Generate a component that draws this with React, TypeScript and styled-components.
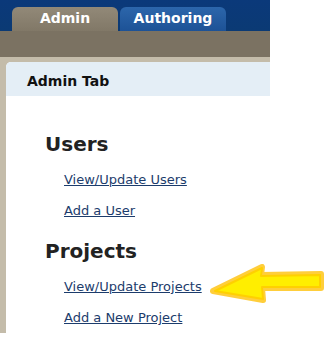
import styled, { createGlobalStyle } from "styled-components";

const GlobalStyle = createGlobalStyle`
  html, body {
    margin: 0;
    padding: 0;
    background: #ffffff;
  }
  body {
    font-family: "DejaVu Sans", Verdana, sans-serif;
  }
`;

export default function App() {
  return (
    <>
      <GlobalStyle />
      <Page>
        <TopBar>
          <Tab $active>Admin</Tab>
          <Tab>Authoring</Tab>
        </TopBar>
        <SubBar />
        <Divider />
        <Body>
          <Panel>
            <PanelHeader>Admin Tab</PanelHeader>
            <PanelContent>
              <Section>
                <Heading>Users</Heading>
                <LinkList>
                  <NavLink href="#">View/Update Users</NavLink>
                  <NavLink href="#">Add a User</NavLink>
                </LinkList>
              </Section>
              <Section>
                <Heading>Projects</Heading>
                <LinkList>
                  <NavLink href="#">View/Update Projects</NavLink>
                  <NavLink href="#">Add a New Project</NavLink>
                </LinkList>
              </Section>
            </PanelContent>
          </Panel>
        </Body>
        {/* annotation arrow pointing at the link */}
        <Arrow width="118" height="44" viewBox="0 0 118 44">
          <path
            d="M4 29 L53 5 L52 13 L112 12 L112 26 L53 26 L54 38 Z"
            fill="#ffc61a"
            stroke="#ffc61a"
            strokeWidth="6"
            strokeLinejoin="round"
            opacity="0.85"
          />
          <path
            d="M6 29 L53 6 L52 14 L111 13 L111 25 L53 25 L54 37 Z"
            fill="#ffee00"
            stroke="#ffd000"
            strokeWidth="2"
            strokeLinejoin="round"
          />
        </Arrow>
      </Page>
    </>
  );
}

const Page = styled.div`
  position: relative;
  width: 270px;
  height: 333px;
  display: flex;
  flex-direction: column;
`;

const TopBar = styled.div`
  height: 31px;
  box-sizing: border-box;
  padding-left: 12px;
  display: flex;
  align-items: flex-end;
  gap: 2px;
  background: linear-gradient(to bottom, #0b397a, #0b3a74);
`;

const Tab = styled.div<{ $active?: boolean }>`
  width: 106px;
  height: 24px;
  box-sizing: border-box;
  border-radius: 6px 6px 0 0;
  display: flex;
  justify-content: center;
  padding-top: 3px;
  font-family: "DejaVu Sans", Verdana, sans-serif;
  font-weight: bold;
  font-size: 14px;
  color: #ffffff;
  background: ${(p) =>
    p.$active
      ? "linear-gradient(to bottom, #928978, #817867)"
      : "linear-gradient(to bottom, #2c66ab, #1d5296)"};
`;

const SubBar = styled.div`
  height: 26px;
  background: #7b7262;
`;

const Divider = styled.div`
  height: 5px;
  background: #c4bcaa;
`;

const Body = styled.div`
  flex: 1;
  display: flex;
  padding-left: 6px;
  background: #c4bcaa;
`;

const Panel = styled.div`
  flex: 1;
  display: flex;
  flex-direction: column;
  background: #ffffff;
  border-top-left-radius: 5px;
  overflow: hidden;
`;

const PanelHeader = styled.div`
  height: 34px;
  box-sizing: border-box;
  padding: 11px 0 0 21px;
  background: #e4eef6;
  font-family: "DejaVu Sans", Verdana, sans-serif;
  font-weight: bold;
  font-size: 14px;
  color: #111111;
`;

const PanelContent = styled.div`
  padding: 36px 0 0 39px;
  display: flex;
  flex-direction: column;
  gap: 20px;
`;

const Section = styled.div`
  display: flex;
  flex-direction: column;
`;

const Heading = styled.h2`
  margin: 0;
  font-family: "DejaVu Sans", Verdana, sans-serif;
  font-weight: bold;
  font-size: 20px;
  line-height: 24px;
  color: #222222;
`;

const LinkList = styled.div`
  display: flex;
  flex-direction: column;
  gap: 15px;
  padding: 16px 0 0 19px;
`;

const NavLink = styled.a`
  font-family: "DejaVu Sans", Verdana, sans-serif;
  font-size: 13px;
  line-height: 16px;
  color: #1c3c6c;
  text-decoration: underline;
  align-self: flex-start;
`;

const Arrow = styled.svg`
  position: absolute;
  left: 209px;
  top: 262px;
`;
